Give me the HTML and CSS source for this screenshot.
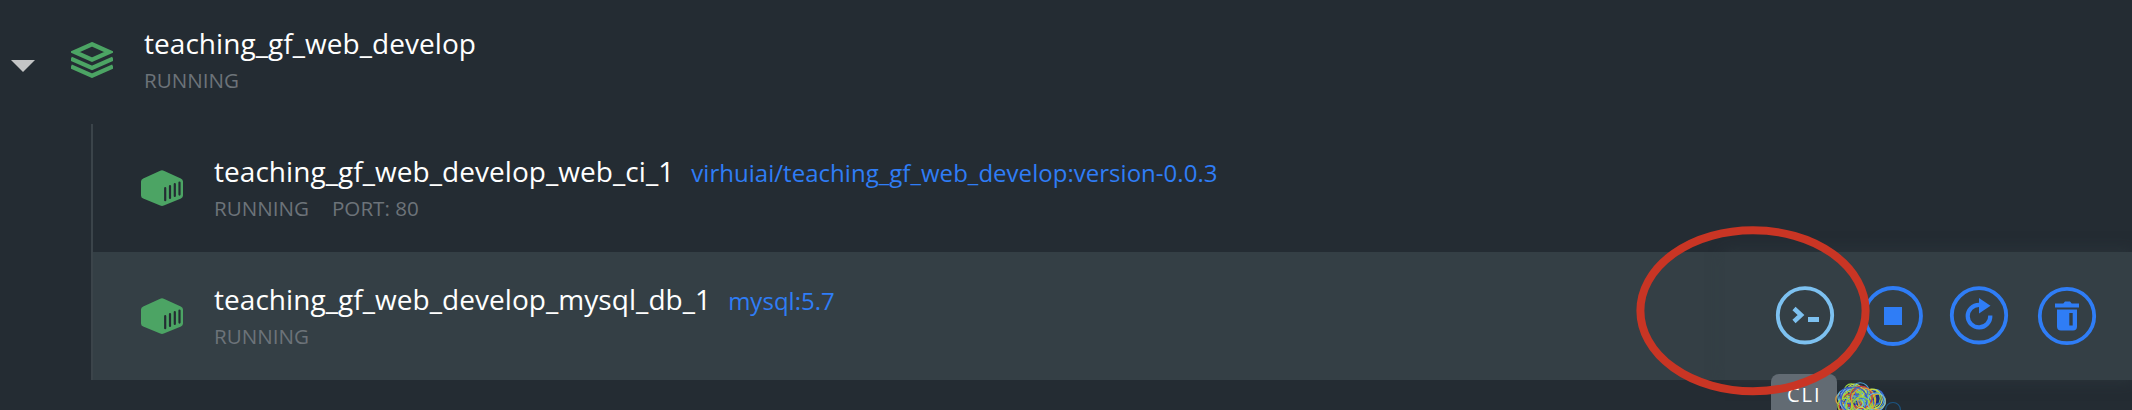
FILE: index.html
```
<!DOCTYPE html>
<html lang="en">
<head>
<meta charset="utf-8">
<title>Containers</title>
<link rel="stylesheet" href="styles.css">
</head>
<body>
<svg class="defs" aria-hidden="true">
  <symbol id="cube" viewBox="0 0 42 36">
    <path class="green" d="M19.200.7a4 4 0 0 1 3.600 0l17 7.700a3.500 3.500 0 0 1 2.200 3.200v13.800a3.500 3.500 0 0 1-2 3.200l-17.200 6.900a4 4 0 0 1-3.600 0l-17-6.900a3.500 3.500 0 0 1-2.200-3.200V11.600a3.500 3.500 0 0 1 2.200-3.200z"/>
    <path class="slots" d="M24.200 18.200v12M29 16v12M33.800 14.200v11.800M38.500 12.600v12"/>
  </symbol>
</svg>
<main class="app">
  <header class="group">
    <span class="caret"></span>
    <svg class="layers" viewBox="0 0 42 36">
      <path d="M21 2.300 38.300 10 21 17.700 3.700 10z"/>
      <path d="M0 16.600 21 25.900 42 16.600M0 24.400 21 33.700 42 24.400"/>
    </svg>
    <div class="info">
      <div class="title">teaching_gf_web_develop</div>
      <div class="status">RUNNING</div>
    </div>
  </header>
  <section class="children">
    <article class="row">
      <svg class="cube"><use href="#cube"/></svg>
      <div class="info">
        <div class="title">teaching_gf_web_develop_web_ci_1<a class="image">virhuiai/teaching_gf_web_develop:version-0.0.3</a></div>
        <div class="status"><span>RUNNING</span><span>PORT: 80</span></div>
      </div>
    </article>
    <article class="row active">
      <svg class="cube"><use href="#cube"/></svg>
      <div class="info">
        <div class="title">teaching_gf_web_develop_mysql_db_1<a class="image">mysql:5.7</a></div>
        <div class="status">RUNNING</div>
      </div>
      <div class="actions">
        <svg class="btn cli" viewBox="0 0 60 60"><circle cx="30" cy="29.300" r="27.200"/><path d="m19 22.500 7 6.500-7 6.500"/><path class="solid" d="M33 31h11v5H33z"/></svg>
        <svg class="btn stop" viewBox="0 0 60 60"><circle cx="30" cy="30" r="28"/><path class="solid" d="M21 21h18v18H21z"/></svg>
        <svg class="btn restart" viewBox="0 0 60 60"><circle cx="30" cy="29.300" r="27.200"/><path d="M30 18.800a11.300 11.300 0 1 0 11.300 10.700"/><path class="solid" d="M30 12v15.500l11.500-7.700z"/></svg>
        <svg class="btn trash" viewBox="0 0 60 60"><circle cx="30" cy="30" r="27.200"/><path class="solid" fill-rule="evenodd" d="M18 17.500h8.300l1.700-2h5l1.700 2H42v4H18zM20 23.500h20v17q0 4-4 4H24q-4 0-4-4zM32.300 27v12.500h3.400V27z"/></svg>
      </div>
    </article>
  </section>
  <div class="tooltip">CLI</div>
  <svg class="pointer" viewBox="0 0 80 40">
    <circle class="core" cx="24" cy="20" r="16"/>
    <circle class="core" cx="44" cy="20" r="11"/>
    <g id="loops"></g>
    <circle class="stray" cx="62" cy="30" r="7.500"/>
  </svg>
  <svg class="marker" viewBox="0 0 234 170"><ellipse cx="117" cy="84.700" rx="112.600" ry="80.500"/></svg>
</main>
<script src="pointer.js"></script>
</body>
</html>
```
FILE: styles.css
```
body { margin: 0; background: #242c33; }
.defs { position: absolute; width: 0; height: 0; }
.app {
  position: relative; width: 2132px; height: 410px; overflow: hidden;
  background: #242c33; color: #fff; font-family: "Open Sans", sans-serif;
}
.group { display: flex; height: 124px; box-sizing: border-box; padding-left: 11px; }
.caret {
  width: 24px; height: 12px; margin-top: 60px; background: #c4c5c6;
  clip-path: polygon(0 0, 100% 0, 50% 100%);
}
.layers { width: 42px; height: 36px; margin: 42px 0 0 36px; fill: none; stroke: #4ca464; stroke-width: 4.300; }
.group .info { margin-left: 31px; padding-top: 24px; }
.info { white-space: nowrap; }
.title { font-size: 28px; line-height: 38px; height: 38px; letter-spacing: 0.05px; }
.status { display: flex; gap: 23px; margin-top: 4px; font-size: 20.6px; line-height: 28px; color: #6c7379; }
.children { margin-left: 91px; border-left: 2px solid #3b444a; }
.row { display: flex; height: 128px; box-sizing: border-box; padding-left: 48px; }
.row .info { margin-left: 31px; padding-top: 28px; }
.row.active { background: #343f45; }
.cube { width: 42px; height: 36px; margin-top: 46px; }
.green { fill: #4ca464; }
.slots { fill: none; stroke: #242c33; stroke-width: 2.200; stroke-linecap: round; }
.image { margin-left: 17px; font-size: 24px; letter-spacing: 0.03px; color: #2f7df6; }
.actions {
  display: flex; align-items: flex-start; margin-left: auto; padding: 34px 35px 0 0;
  width: 372px; justify-content: flex-end; box-shadow: 0 0 14px #343f4580;
}
.btn { width: 60px; height: 60px; fill: none; stroke: #2f7df6; stroke-width: 3.800; color: #2f7df6; }
.btn .solid { fill: currentColor; stroke: none; }
.cli { stroke: #7dc1f0; color: #7dc1f0; margin-right: 28px; }
.cli path { stroke-width: 4.600; }
.stop { margin-right: 26px; }
.restart { margin-right: 28px; }
.restart path { stroke-width: 4.200; }
.tooltip {
  position: absolute; left: 1771px; top: 374px; width: 66px; height: 48px;
  box-sizing: border-box; padding-left: 16px; border-radius: 8px; background: #626b73;
  font-size: 20px; line-height: 42px; letter-spacing: 2px;
}
.pointer { position: absolute; left: 1831px; top: 380px; width: 80px; height: 40px; fill: none; stroke-width: 1.200; }
.core { fill: #1c2f8c; stroke: none; opacity: .8; }
.stray { stroke: #1c5480; }
.marker { position: absolute; left: 1636px; top: 226px; width: 234px; height: 170px; fill: none; stroke: #c93524; stroke-width: 8; }
```
FILE: pointer.js
```
// Draws the tangle of coloured rings that decorates the mouse pointer.
const colors = ["#a6d63c", "#4fa3d8", "#9ad83c", "#e0a03a", "#3a6fd8", "#c8dc4a", "#62b8e8", "#c83c3c", "#8cc84a", "#3a58c8"];
const group = document.getElementById("loops");
for (let i = 0; i < 46; i++) {
  const ring = document.createElementNS("http://www.w3.org/2000/svg", "circle");
  const side = i % 7 === 0;
  const angle = i * 2.4 + (i % 3);
  const radius = side ? 7 + i % 4 : 5 + (i * 5) % 9;
  const reach = (side ? 12 : 14 + i % 6) - radius;
  ring.setAttribute("cx", (side ? 42 : 25) + Math.cos(angle) * reach * 1.1);
  ring.setAttribute("cy", 21 + Math.sin(angle) * reach);
  ring.setAttribute("r", radius);
  ring.setAttribute("stroke", colors[(i * 3) % colors.length]);
  group.appendChild(ring);
}
```
